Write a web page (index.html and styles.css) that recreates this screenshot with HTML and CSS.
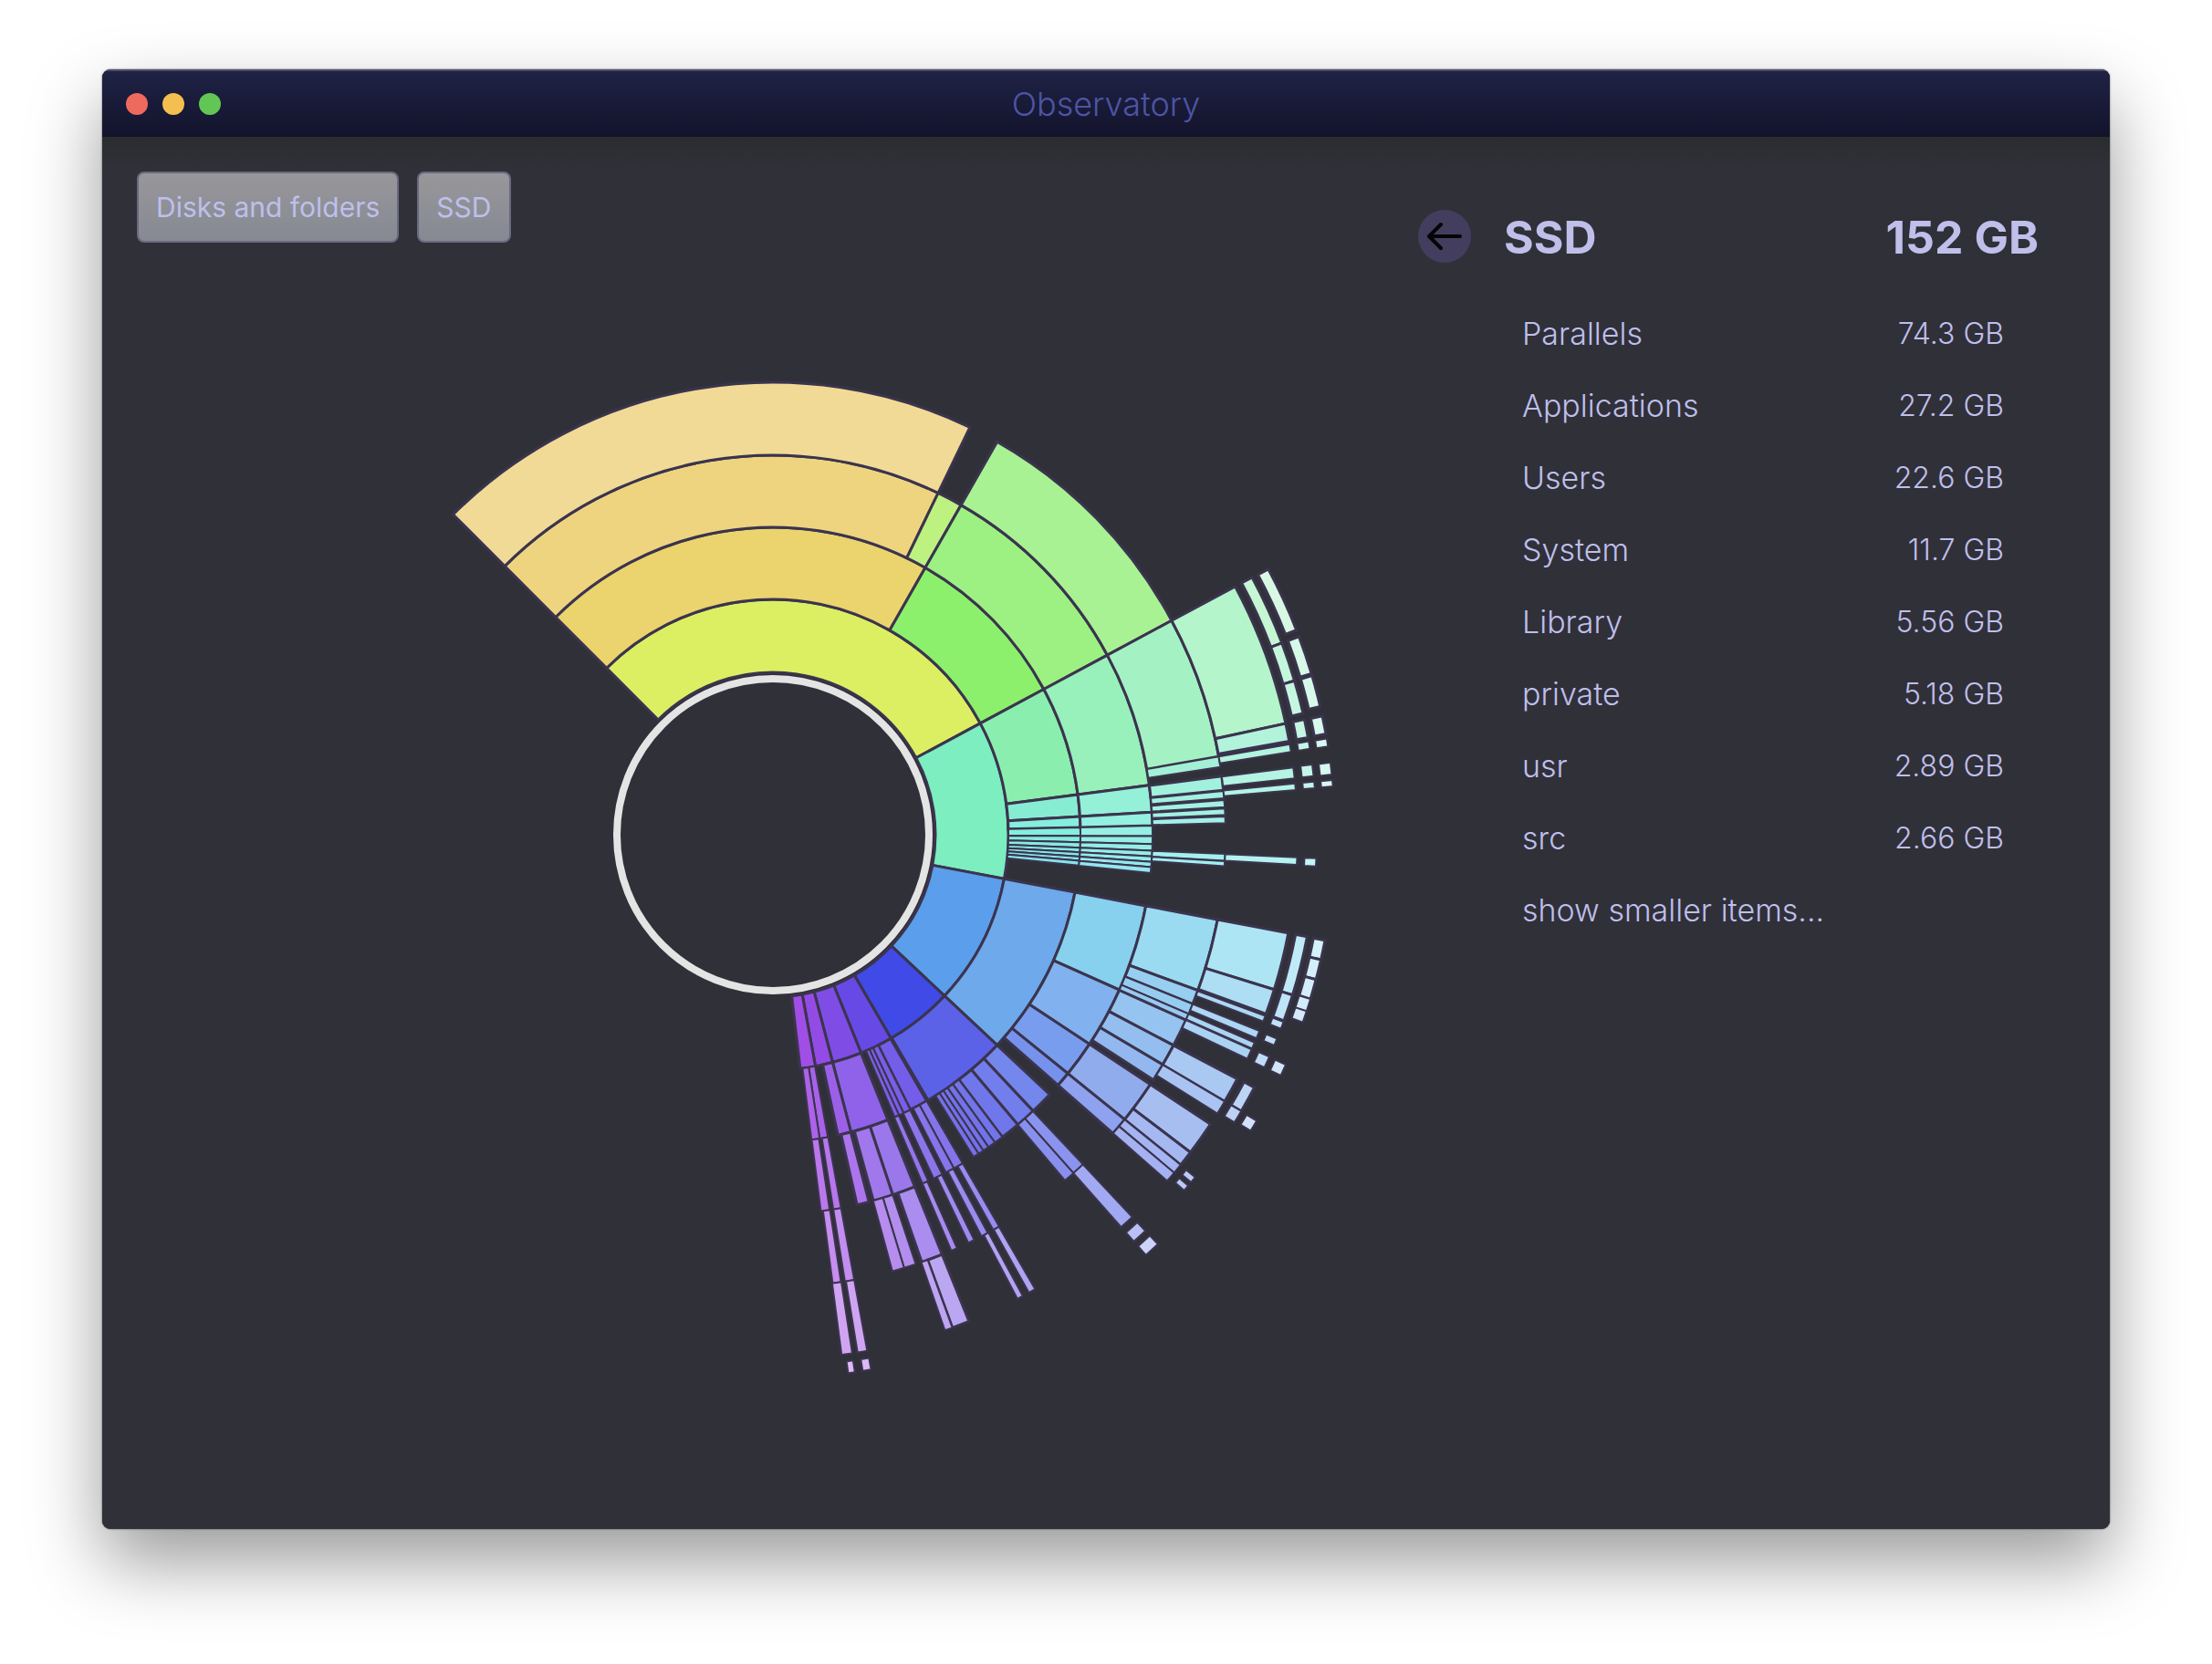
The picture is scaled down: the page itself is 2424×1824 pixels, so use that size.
FILE: index.html
```html
<!DOCTYPE html>
<html lang="en">
<head>
<meta charset="utf-8">
<meta name="viewport" content="width=device-width, initial-scale=1">
<title>Observatory</title>
<link rel="stylesheet" href="styles.css">
</head>
<body>
<div class="window">
  <header class="titlebar">
    <div class="lights">
      <span class="light light-close"></span>
      <span class="light light-minimise"></span>
      <span class="light light-zoom"></span>
    </div>
    <h1 class="title">Observatory</h1>
  </header>
  <main class="content">
    <section class="explorer">
      <nav class="crumbs" aria-label="Location">
        <button class="crumb" type="button">Disks and folders</button>
        <button class="crumb" type="button">SSD</button>
      </nav>
      <svg class="sunburst" viewBox="-697 -640 1394 1280" role="img" aria-label="Disk usage of SSD">
        <g id="arcs" class="arcs"></g>
        <circle class="hub" r="171"/>
      </svg>
    </section>
    <aside class="details">
      <div class="summary">
        <button class="back" type="button" aria-label="Back">
          <svg class="back-icon" viewBox="0 0 58 58"><path d="M46 29H12M25 16L12 29L25 42"/></svg>
        </button>
        <h2 class="name">SSD</h2>
        <span class="total">152 GB</span>
      </div>
      <table class="items">
        <tbody>
          <tr><th scope="row">Parallels</th><td>74.3 GB</td></tr>
          <tr><th scope="row">Applications</th><td>27.2 GB</td></tr>
          <tr><th scope="row">Users</th><td>22.6 GB</td></tr>
          <tr><th scope="row">System</th><td>11.7 GB</td></tr>
          <tr><th scope="row">Library</th><td>5.56 GB</td></tr>
          <tr><th scope="row">private</th><td>5.18 GB</td></tr>
          <tr><th scope="row">usr</th><td>2.89 GB</td></tr>
          <tr><th scope="row">src</th><td>2.66 GB</td></tr>
        </tbody>
      </table>
      <a class="more" href="#more">show smaller items...</a>
    </aside>
  </main>
</div>
<script src="sunburst.js"></script>
</body>
</html>
```
FILE: styles.css
```css
* {
  box-sizing: border-box;
}

body {
  margin: 0;
  padding: 76px 112px 148px;
  min-height: 100vh;
  display: flex;
  background: #fff;
  color: #bfbfea;
  font-family: Inter, "Open Sans", sans-serif;
  font-size: 34px;
  font-weight: 300;
}

.window {
  flex: 1;
  display: flex;
  flex-direction: column;
  overflow: hidden;
  border-radius: 9px;
  background: #303039;
  box-shadow: 0 0 2px rgba(0, 0, 0, 0.7), 0 36px 80px rgba(0, 0, 0, 0.4);
}

.titlebar {
  display: grid;
  grid-template-columns: 1fr auto 1fr;
  align-items: center;
  height: 74px;
  padding: 0 26px;
  border-top: 2px solid #4b4d68;
  background: linear-gradient(#1f2245, #13132b);
}

.lights {
  display: flex;
  gap: 16px;
}

.light {
  width: 24px;
  height: 24px;
  border-radius: 50%;
}

.light-close { background: #ee6a5f; }
.light-minimise { background: #f5bf50; }
.light-zoom { background: #62c655; }

.title {
  margin: 0;
  color: #4c55a5;
  font-size: 36px;
  font-weight: 300;
  line-height: 40px;
}

.content {
  flex: 1;
  display: grid;
  grid-template-columns: minmax(0, 1fr) 680px;
  gap: 10px;
  padding: 38px 78px 38px 38px;
  background: linear-gradient(#2b2c2f, #303039 34px);
}

.crumbs {
  display: flex;
  gap: 20px;
}

.crumb {
  height: 78px;
  padding: 0 19px;
  border: 2px solid #6b6880;
  border-radius: 8px;
  background: linear-gradient(#98979a, #868993);
  color: #bebfeb;
  font-family: inherit;
  font-size: 30px;
  font-weight: 400;
}

.sunburst {
  display: block;
  width: 100%;
  margin-top: 9px;
}

.arcs {
  stroke: #3b344e;
  stroke-width: 3;
}

.arcs .sliver {
  stroke-width: 2;
}

.hub {
  fill: none;
  stroke: #e4e4e4;
  stroke-width: 8;
}

.details {
  padding-top: 42px;
}

.summary {
  display: flex;
  align-items: center;
  height: 58px;
}

.back {
  width: 58px;
  height: 58px;
  padding: 0;
  border: 0;
  border-radius: 50%;
  background: #433e5e;
}

.back-icon {
  display: block;
  fill: none;
  stroke: #050508;
  stroke-width: 4;
  stroke-linecap: round;
  stroke-linejoin: round;
}

.name,
.total {
  margin: 0 0 0 36px;
  padding-top: 2px;
  font-size: 50px;
  font-weight: 700;
  line-height: 58px;
}

.total {
  margin-left: auto;
}

.items {
  width: 528px;
  margin: 38px 0 0 114px;
  border-collapse: collapse;
}

.items th,
.items td {
  height: 79px;
  padding: 0;
  font-weight: 300;
  text-align: left;
}

.items td {
  font-size: 32px;
  text-align: right;
}

.more {
  display: block;
  margin-left: 114px;
  color: inherit;
  line-height: 79px;
  text-decoration: none;
}
```
FILE: sunburst.js
```js
// Inner and outer radius of each level of the tree.
const LEVELS = [
  [178, 258], [258, 337], [337, 416], [416, 496], [496, 575], [583, 596], [603, 616]
];

// One list per level: start angle, end angle (degrees clockwise from east), fill.
const ARCS = [
  [
    [-134.95, -28.25, '#dcef63'],
    [-28.25, 10.8, '#7ceec0'],
    [10.8, 43.2, '#5b9eeb'],
    [43.2, 59.9, '#404ae6'],
    [59.9, 68, '#674ae5'],
    [68, 75.3, '#7f4de5'],
    [75.3, 79.6, '#944be5'],
    [79.6, 83.35, '#a14ee7']
  ],
  [
    [-134.95, -60.3, '#ebd36d'],
    [-60.3, -28.25, '#8cf06d'],
    [-28.25, -7.5, '#8aefae'],
    [-7.5, -3.4, '#87edd2'],
    [-3.4, -1.38, '#85eedc'],
    [-1.38, 0.2, '#86eede'],
    [0.2, 1.4, '#86ecdf'],
    [1.4, 2.42, '#86ebe1'],
    [2.42, 3.28, '#86e9e4'],
    [3.28, 4.08, '#86e8e6'],
    [4.08, 4.85, '#86e6e8'],
    [4.85, 5.75, '#86e4ea'],
    [10.8, 43.2, '#6da9eb'],
    [43.2, 59.7, '#5b62e8'],
    [60, 63.45, '#735de9'],
    [63.45, 64.85, '#785ee9'],
    [64.85, 65.8, '#7b5ee9'],
    [65.8, 66.7, '#7e5fe9'],
    [68.05, 75.3, '#8f62e9'],
    [75.3, 77.8, '#9c60e8'],
    [79.7, 81.25, '#a762e9'],
    [81.25, 82.8, '#ad62ea']
  ],
  [
    [-134.95, -64.2, '#eed47f'],
    [-64.2, -60.3, '#bdf180'],
    [-60.3, -28.25, '#9cf182'],
    [-28.25, -7.5, '#98f0ba'],
    [-7.5, -3.4, '#94f0d7'],
    [-3.4, -1.38, '#94f0e0'],
    [-1.38, 0.2, '#94f0e3'],
    [0.2, 1.4, '#94efe4'],
    [1.4, 2.42, '#94eee6'],
    [2.42, 3.28, '#94eee8'],
    [3.28, 4.1, '#94ecea'],
    [4.1, 4.88, '#94eaec'],
    [4.88, 5.78, '#94e8ee'],
    [10.8, 24.13, '#87d0ee'],
    [24.13, 33.5, '#81b1ee'],
    [33.5, 39, '#799dee'],
    [39, 41.3, '#7692ed'],
    [43.2, 46.72, '#7387ed'],
    [46.72, 49.83, '#727eec'],
    [49.83, 52.8, '#7077ea'],
    [52.8, 54.2, '#7174ea'],
    [54.2, 55.4, '#7272ea'],
    [55.4, 56.35, '#7371ea'],
    [56.35, 57.2, '#7471ea'],
    [57.2, 58.1, '#7671ea'],
    [60, 61.53, '#8474eb'],
    [61.53, 62.9, '#8874eb'],
    [63.5, 64.95, '#8c75eb'],
    [65.85, 66.8, '#9276eb'],
    [68.05, 71.6, '#9a77eb'],
    [71.6, 74.65, '#a178eb'],
    [75.35, 77.2, '#ac75ed'],
    [79.65, 80.85, '#b577eb'],
    [81.4, 82.75, '#bb78ec']
  ],
  [
    [-134.95, -64.2, '#f1da95'],
    [-60.3, -28.25, '#a9f294'],
    [-28.25, -9.95, '#a4f2c4'],
    [-9.95, -8.6, '#a2f1d6'],
    [-7.45, -5.64, '#a2f1dc'],
    [-5.54, -4.63, '#a2f1df'],
    [-4.38, -3.51, '#a2f1e1'],
    [-3.32, -2.51, '#a2f1e3'],
    [-2.32, -1.47, '#a2f1e6'],
    [2.44, 3.3, '#a3f1ee'],
    [3.34, 3.99, '#a3eff0'],
    [10.8, 20.13, '#9adbf2'],
    [20.13, 21.97, '#97cff1'],
    [21.97, 23.32, '#97ccf1'],
    [23.32, 24.17, '#97caf1'],
    [24.17, 27.75, '#96c4f0'],
    [27.75, 30.53, '#94bdf0'],
    [30.53, 32.8, '#92b8ef'],
    [33.5, 39, '#91aced'],
    [39, 41.3, '#8ea2ef'],
    [46.75, 48.4, '#8a93ee'],
    [48.4, 49.83, '#8890ee'],
    [60, 60.87, '#978cef'],
    [61.65, 62.57, '#9a8bef'],
    [63.58, 64.42, '#9f8bef'],
    [66, 66.8, '#a68cef'],
    [68.05, 70.8, '#aa8dee'],
    [71.6, 73.15, '#b28eee'],
    [73.15, 74.7, '#b68dee'],
    [79.65, 80.85, '#c28eef'],
    [81.35, 82.42, '#c68eef']
  ],
  [
    [-28.25, -12.24, '#b4f5cc'],
    [-12.24, -10.27, '#b3f3dc'],
    [-9.95, -9.09, '#b3f4dd'],
    [-7.37, -6.17, '#b3f4e2'],
    [-5.62, -4.9, '#b3f4e5'],
    [2.46, 3.29, '#b3f3f0'],
    [10.8, 17.17, '#aee5f5'],
    [17.17, 19.97, '#addef3'],
    [20.2, 20.86, '#acd8f3'],
    [21.97, 22.85, '#acd6f3'],
    [23.33, 24.07, '#abd4f3'],
    [24.17, 25.3, '#abd2f3'],
    [27.75, 30.56, '#a9c8f2'],
    [30.56, 32.1, '#a9c4f2'],
    [33.5, 37.27, '#a7bff0'],
    [37.27, 39, '#a5b8f2'],
    [39, 40.12, '#a5b4f2'],
    [40.12, 41.3, '#a5b2f2'],
    [46.77, 48.42, '#a1a9f2'],
    [60.02, 60.8, '#b0a3f2'],
    [61.56, 62.23, '#b3a3f2'],
    [68.05, 70, '#bba6f2'],
    [70, 70.87, '#bda5f2'],
    [79.65, 80.72, '#cfa5f2'],
    [81.3, 82.48, '#d1a4f2']
  ],
  [
    [-28.25, -20.65, '#c5f7d3'],
    [-20.65, -16.45, '#c5f7dc'],
    [-16.45, -12.9, '#c5f7e0'],
    [-12.24, -10.3, '#c5f7e4'],
    [-9.9, -9.09, '#c5f7e6'],
    [-7.43, -6.18, '#c5f7e9'],
    [-5.62, -4.91, '#c5f7eb'],
    [2.48, 3.35, '#c3f6f3'],
    [10.8, 17.15, '#bfebf7'],
    [17.15, 20, '#bfe5f7'],
    [20.13, 20.9, '#bfe2f7'],
    [22.02, 22.8, '#bfdff7'],
    [24.1, 25.35, '#bfdcf7'],
    [27.7, 30.55, '#bcd5f5'],
    [30.55, 31.95, '#bcd2f5'],
    [39.05, 39.75, '#bccaf6'],
    [40.2, 40.87, '#bcc8f6'],
    [46.77, 48.42, '#b8c0f5'],
    [79.6, 80.5, '#dcbaf6'],
    [81.33, 82.05, '#debaf6']
  ],
  [
    [-28.2, -21.36, '#d7f9e4'],
    [-20.65, -16.66, '#d7f9e8'],
    [-16.44, -13.18, '#d7f9ea'],
    [-12.2, -10.33, '#d7f9ee'],
    [-9.86, -9.04, '#d7f9ee'],
    [-7.38, -6.15, '#d7f9f0'],
    [-5.6, -4.93, '#d7f9f1'],
    [10.83, 12.85, '#d3f2fa'],
    [12.85, 14.93, '#d3f0fa'],
    [14.93, 17, '#d3eefa'],
    [17, 18.3, '#d3ecfa'],
    [18.3, 19.5, '#d3eafa'],
    [24.15, 25.37, '#d2e6fa'],
    [30.6, 31.8, '#d2e2fa'],
    [46.77, 48.42, '#ccd2f8']
  ]
];

// Arcs narrower than this many degrees get a thinner outline.
const SLIVER = 1.7;

function point(radius, degrees) {
  const angle = degrees * Math.PI / 180;
  return (radius * Math.cos(angle)).toFixed(2) + ' ' + (radius * Math.sin(angle)).toFixed(2);
}

const group = document.getElementById('arcs');

ARCS.forEach((arcs, level) => {
  const [inner, outer] = LEVELS[level];
  arcs.forEach(([start, end, fill]) => {
    const path = document.createElementNS('http://www.w3.org/2000/svg', 'path');
    path.setAttribute('d',
      `M${point(inner, start)}L${point(outer, start)}` +
      `A${outer} ${outer} 0 0 1 ${point(outer, end)}` +
      `L${point(inner, end)}A${inner} ${inner} 0 0 0 ${point(inner, start)}Z`);
    path.setAttribute('fill', fill);
    if (end - start < SLIVER) {
      path.setAttribute('class', 'sliver');
    }
    group.appendChild(path);
  });
});
```
